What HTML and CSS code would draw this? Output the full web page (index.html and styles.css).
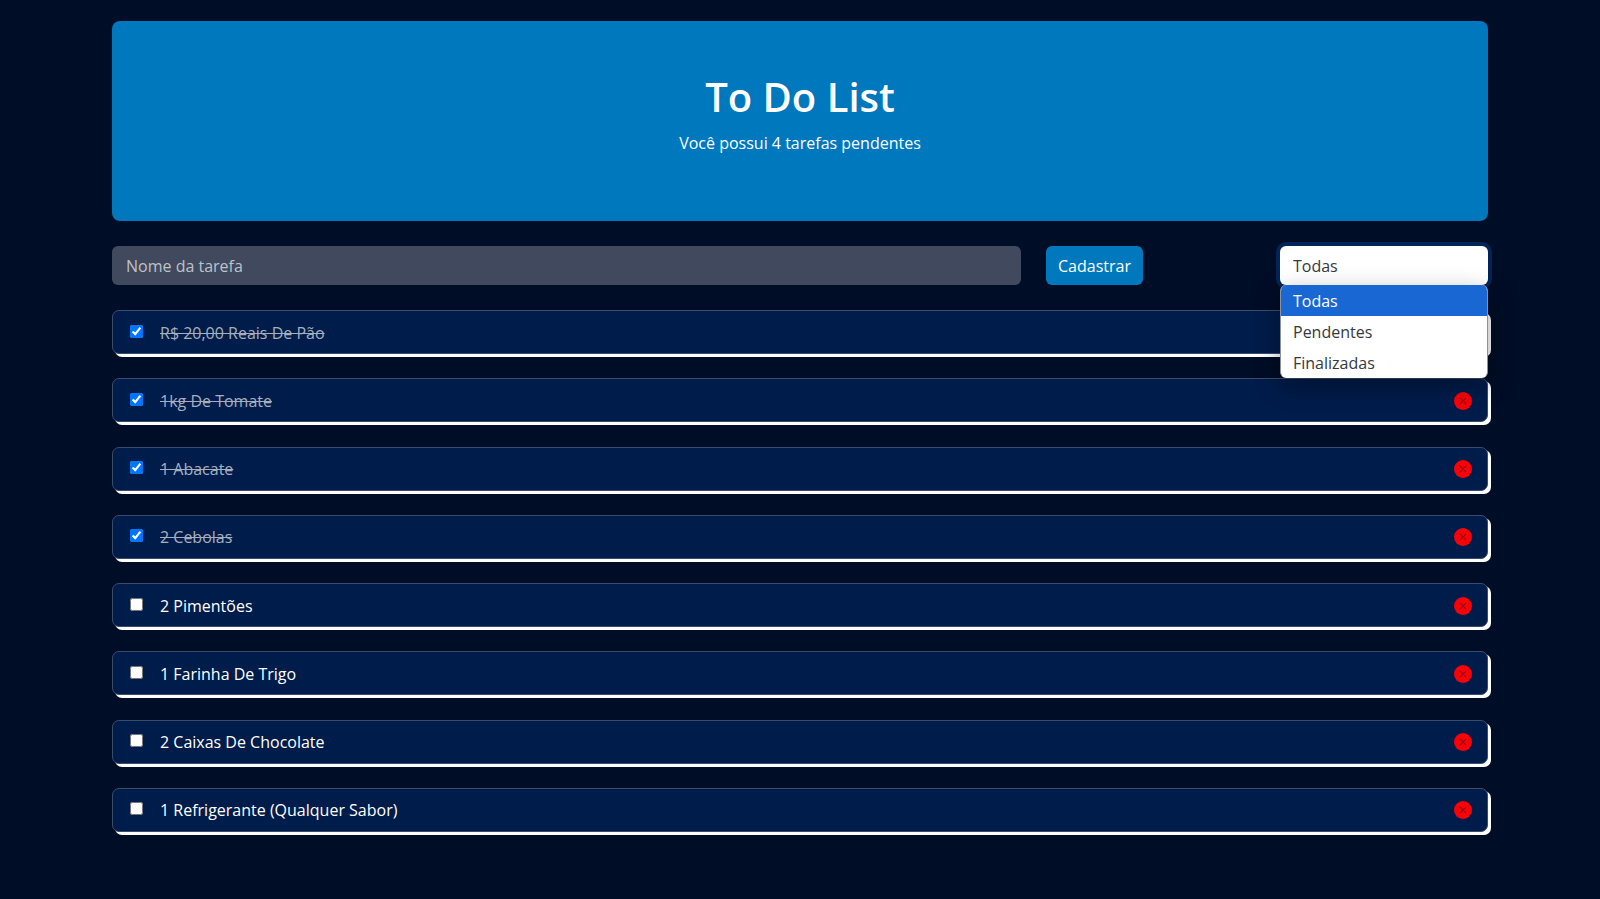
FILE: index.html
```html
<!DOCTYPE html>
<html lang="pt-BR">
<head>
<meta charset="utf-8">
<meta name="viewport" content="width=device-width, initial-scale=1">
<title>To Do List</title>
<link rel="stylesheet" href="styles.css">
</head>
<body>
<svg class="sprite" aria-hidden="true">
  <symbol id="icon-remove" viewBox="0 0 18 18">
    <circle cx="9" cy="9" r="9" fill="#fb0007"/>
    <path d="M6.2 6.2l5.6 5.6M11.8 6.2l-5.6 5.6" stroke="#8f0010" stroke-width="1.2" stroke-linecap="round"/>
  </symbol>
</svg>
<main class="page">
  <header class="banner">
    <h1 class="banner-title">To Do List</h1>
    <p class="banner-text">Você possui 4 tarefas pendentes</p>
  </header>

  <form class="toolbar">
    <input class="task-input" type="text" placeholder="Nome da tarefa" aria-label="Nome da tarefa">
    <button class="submit" type="button">Cadastrar</button>
    <div class="filter">
      <select class="filter-select" aria-label="Filtro">
        <option>Todas</option>
        <option>Pendentes</option>
        <option>Finalizadas</option>
      </select>
      <ul class="filter-menu" role="listbox" aria-label="Filtro">
        <li class="filter-option selected" role="option" aria-selected="true">Todas</li>
        <li class="filter-option" role="option" aria-selected="false">Pendentes</li>
        <li class="filter-option" role="option" aria-selected="false">Finalizadas</li>
      </ul>
    </div>
  </form>

  <ul class="tasks">
    <li class="task"><input class="check" type="checkbox" id="t1" checked><label class="name" for="t1">R$ 20,00 Reais De Pão</label><button class="remove" type="button" aria-label="Remover"><svg class="icon"><use href="#icon-remove"/></svg></button></li>
    <li class="task"><input class="check" type="checkbox" id="t2" checked><label class="name" for="t2">1kg De Tomate</label><button class="remove" type="button" aria-label="Remover"><svg class="icon"><use href="#icon-remove"/></svg></button></li>
    <li class="task"><input class="check" type="checkbox" id="t3" checked><label class="name" for="t3">1 Abacate</label><button class="remove" type="button" aria-label="Remover"><svg class="icon"><use href="#icon-remove"/></svg></button></li>
    <li class="task"><input class="check" type="checkbox" id="t4" checked><label class="name" for="t4">2 Cebolas</label><button class="remove" type="button" aria-label="Remover"><svg class="icon"><use href="#icon-remove"/></svg></button></li>
    <li class="task"><input class="check" type="checkbox" id="t5"><label class="name" for="t5">2 Pimentões</label><button class="remove" type="button" aria-label="Remover"><svg class="icon"><use href="#icon-remove"/></svg></button></li>
    <li class="task"><input class="check" type="checkbox" id="t6"><label class="name" for="t6">1 Farinha De Trigo</label><button class="remove" type="button" aria-label="Remover"><svg class="icon"><use href="#icon-remove"/></svg></button></li>
    <li class="task"><input class="check" type="checkbox" id="t7"><label class="name" for="t7">2 Caixas De Chocolate</label><button class="remove" type="button" aria-label="Remover"><svg class="icon"><use href="#icon-remove"/></svg></button></li>
    <li class="task"><input class="check" type="checkbox" id="t8"><label class="name" for="t8">1 Refrigerante (Qualquer Sabor)</label><button class="remove" type="button" aria-label="Remover"><svg class="icon"><use href="#icon-remove"/></svg></button></li>
  </ul>
</main>
</body>
</html>
```
FILE: styles.css
```css
* { box-sizing: border-box; }

body {
  margin: 0;
  background: #000d26;
  color: #fff;
  font: 16px/24px "Segoe UI", "Open Sans", "Noto Sans", sans-serif;
}

.sprite { display: none; }

.page {
  display: flex;
  flex-direction: column;
  gap: 25px;
  min-height: 100vh;
  padding: 21px 7% 67px;
}

.banner {
  display: flex;
  flex-direction: column;
  align-items: center;
  gap: 10px;
  padding: 51px 24px 66px;
  border-radius: 8px;
  background: #0078be;
}

.banner-title {
  margin: 0;
  font-size: 40px;
  line-height: 49px;
  font-weight: 600;
}

.banner-text { margin: 0; }

.toolbar {
  display: grid;
  grid-template-columns: 1fr 209px 208px;
  gap: 25px;
}

.task-input,
.submit,
.filter-select {
  height: 39px;
  padding: 1px 13px 0;
  border: 0;
  border-radius: 6px;
  font: inherit;
}

.task-input {
  width: 100%;
  padding-left: 14px;
  background: #40495d;
  color: #fff;
}

.task-input::placeholder { color: #bfc2ca; opacity: 1; }

.submit {
  justify-self: start;
  padding: 1px 12px 0;
  background: #0078be;
  color: #fff;
}

.filter { position: relative; }

.filter-select {
  display: block;
  width: 100%;
  appearance: none;
  background: #fff;
  color: #353a40;
  box-shadow: 0 0 0 4px #032458;
}

.filter-menu {
  position: absolute;
  z-index: 1;
  top: 100%;
  left: 0;
  right: 0;
  margin: 0;
  padding: 0;
  overflow: hidden;
  list-style: none;
  border: 1px solid #8a929f;
  border-width: 0 1px;
  border-radius: 6px;
  background: #fff;
  color: #353a40;
  box-shadow: 0 8px 24px rgba(0, 0, 0, 0.35);
}

.filter-option {
  padding: 2px 12px 0;
  line-height: 29px;
}

.filter-option.selected { background: #1967d2; color: #fff; }

.tasks {
  display: flex;
  flex: 1;
  flex-direction: column;
  justify-content: space-between;
  gap: 24px;
  margin: 0;
  padding: 0;
  list-style: none;
}

.task {
  display: flex;
  align-items: center;
  gap: 17px;
  height: 44px;
  padding: 1px 15px 0 17px;
  border: 1px solid #3a4c6e;
  border-radius: 7px;
  background: #001c4a;
  box-shadow: 3px 3px 0 #fff;
}

.check {
  width: 13px;
  height: 13px;
  margin: 0 0 3px;
}

.name { flex: 1; }

.check:checked + .name {
  color: #a6afbe;
  text-decoration: line-through;
}

.remove {
  display: flex;
  padding: 0;
  border: 0;
  background: none;
}

.icon { width: 18px; height: 18px; }
```
